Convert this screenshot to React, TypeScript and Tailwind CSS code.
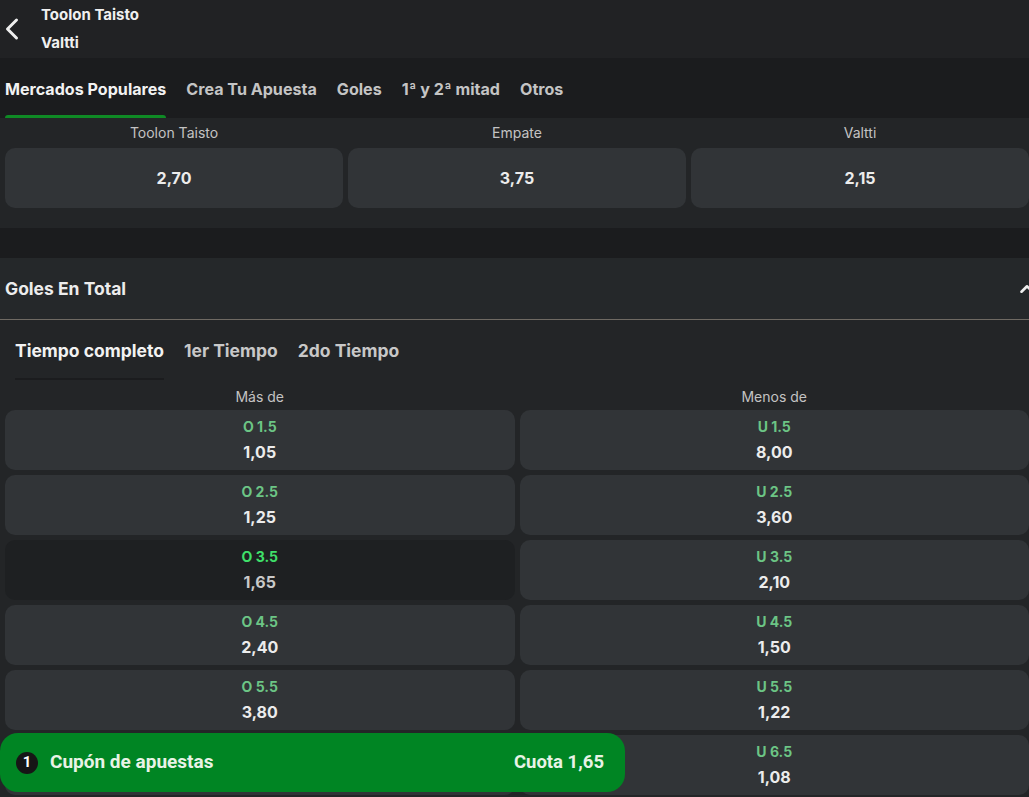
import { ChevronLeft, ChevronUp } from "lucide-react";

interface Line {
    label: string;
    odds: string;
    picked?: boolean;
}

const mainTabs = ["Mercados Populares", "Crea Tu Apuesta", "Goles", "1ª y 2ª mitad", "Otros"];
const periodTabs = ["Tiempo completo", "1er Tiempo", "2do Tiempo"];

const result = [
    { name: "Toolon Taisto", odds: "2,70" },
    { name: "Empate", odds: "3,75" },
    { name: "Valtti", odds: "2,15" },
];

const over: Line[] = [
    { label: "O 1.5", odds: "1,05" },
    { label: "O 2.5", odds: "1,25" },
    { label: "O 3.5", odds: "1,65", picked: true },
    { label: "O 4.5", odds: "2,40" },
    { label: "O 5.5", odds: "3,80" },
    { label: "O 6.5", odds: "9,50" },
];

const under: Line[] = [
    { label: "U 1.5", odds: "8,00" },
    { label: "U 2.5", odds: "3,60" },
    { label: "U 3.5", odds: "2,10" },
    { label: "U 4.5", odds: "1,50" },
    { label: "U 5.5", odds: "1,22" },
    { label: "U 6.5", odds: "1,08" },
];

const OddsCell = ({ line }: { line: Line }) => (
    <button
        className={`h-[60px] rounded-[10px] flex flex-col items-center justify-center leading-none ${
            line.picked ? "bg-[#1e2022]" : "bg-[#313437]"
        }`}
    >
        <span className={`text-[14px] font-bold ${line.picked ? "text-[#3fe06a]" : "text-[#6cc585]"}`}>
            {line.label}
        </span>
        <span className={`mt-[10px] text-[16px] font-bold ${line.picked ? "text-[#c9c9c9]" : "text-[#ececec]"}`}>
            {line.odds}
        </span>
    </button>
);

export default function App() {
    return (
        <div
            className="relative w-[1029px] h-[797px] overflow-hidden bg-[#232527] text-white"
            style={{ fontFamily: "Inter, 'Noto Sans', sans-serif" }}
        >
            {/* cabecera del partido */}
            <div className="h-[58px] bg-[#212224] flex items-center">
                <ChevronLeft className="w-[36px] h-[36px] -ml-[6px] shrink-0 text-[#eeeeee]" strokeWidth={2} />
                <div className="ml-[11px] flex flex-col gap-[9px] text-[15px] font-bold text-[#f0f0f0] leading-[19px] -mt-[1px]">
                    <span>Toolon Taisto</span>
                    <span>Valtti</span>
                </div>
            </div>

            {/* pestañas de mercados */}
            <div className="h-[60px] bg-[#1b1c1e] flex items-stretch pl-[5px] gap-[20px]">
                {mainTabs.map((t, i) => (
                    <div key={t} className="relative flex items-center pt-[2px]">
                        <span className={`text-[16.1px] font-bold ${i === 0 ? "text-[#f2f2f2]" : "text-[#c4c4c4]"}`}>{t}</span>
                        {i === 0 && <span className="absolute left-0 right-0 bottom-0 h-[3px] bg-[#0f8a25] rounded-t" />}
                    </div>
                ))}
            </div>

            {/* 1X2 */}
            <div className="h-[110px] pl-[5px] pt-[7px] grid grid-cols-3 gap-x-[5px]">
                {result.map((r) => (
                    <div key={r.name} className="flex flex-col">
                        <span className="text-center text-[14px] text-[#c3c3c3] leading-[16px]">{r.name}</span>
                        <button className="mt-[7px] h-[60px] rounded-[10px] bg-[#313437] text-[16px] font-bold text-[#ececec]">
                            {r.odds}
                        </button>
                    </div>
                ))}
            </div>

            <div className="h-[30px] bg-[#1b1c1e]" />

            {/* Goles En Total */}
            <div className="h-[62px] bg-[#25282a] flex items-center justify-between pl-[5px] border-b border-[#6f6a63]">
                <span className="text-[17.5px] font-bold text-[#ececec] pt-[2px]">Goles En Total</span>
                <ChevronUp className="w-[22px] h-[22px] -mr-[9px] text-[#eeeeee]" strokeWidth={2.8} />
            </div>

            <div className="h-[60px] flex items-stretch pl-[15px] gap-[20px]">
                {periodTabs.map((t, i) => (
                    <div key={t} className="relative flex items-center pt-[2px]">
                        <span className={`text-[17.5px] font-bold ${i === 0 ? "text-[#f2f2f2]" : "text-[#c8c8c8]"}`}>{t}</span>
                        {i === 0 && <span className="absolute left-0 right-0 bottom-0 h-[2px] bg-[#1b1c1e]" />}
                    </div>
                ))}
            </div>

            <div className="pl-[5px] grid grid-cols-2 gap-x-[5px]">
                <div className="flex flex-col gap-[5px]">
                    <span className="text-center text-[14px] text-[#c3c3c3] leading-[16px] mt-[9px]">Más de</span>
                    {over.map((l) => (
                        <OddsCell key={l.label} line={l} />
                    ))}
                </div>
                <div className="flex flex-col gap-[5px]">
                    <span className="text-center text-[14px] text-[#c3c3c3] leading-[16px] mt-[9px]">Menos de</span>
                    {under.map((l) => (
                        <OddsCell key={l.label} line={l} />
                    ))}
                </div>
            </div>

            {/* cupón flotante */}
            <div
                className="absolute left-0 top-[733px] w-[625px] h-[59px] rounded-[18px] bg-[#008523] flex items-center justify-between pl-[16px] pr-[21px] text-[#e8f3e6]"
                style={{ fontFamily: "Roboto, 'Liberation Sans', sans-serif" }}
            >
                <div className="flex items-center gap-[12px]">
                    <span className="w-[22px] h-[22px] rounded-full bg-[#161616] flex items-center justify-center text-[15px] font-bold text-white">
                        1
                    </span>
                    <span className="text-[19px] font-bold">Cupón de apuestas</span>
                </div>
                <span className="text-[18.5px] font-bold">Cuota 1,65</span>
            </div>
        </div>
    );
}
